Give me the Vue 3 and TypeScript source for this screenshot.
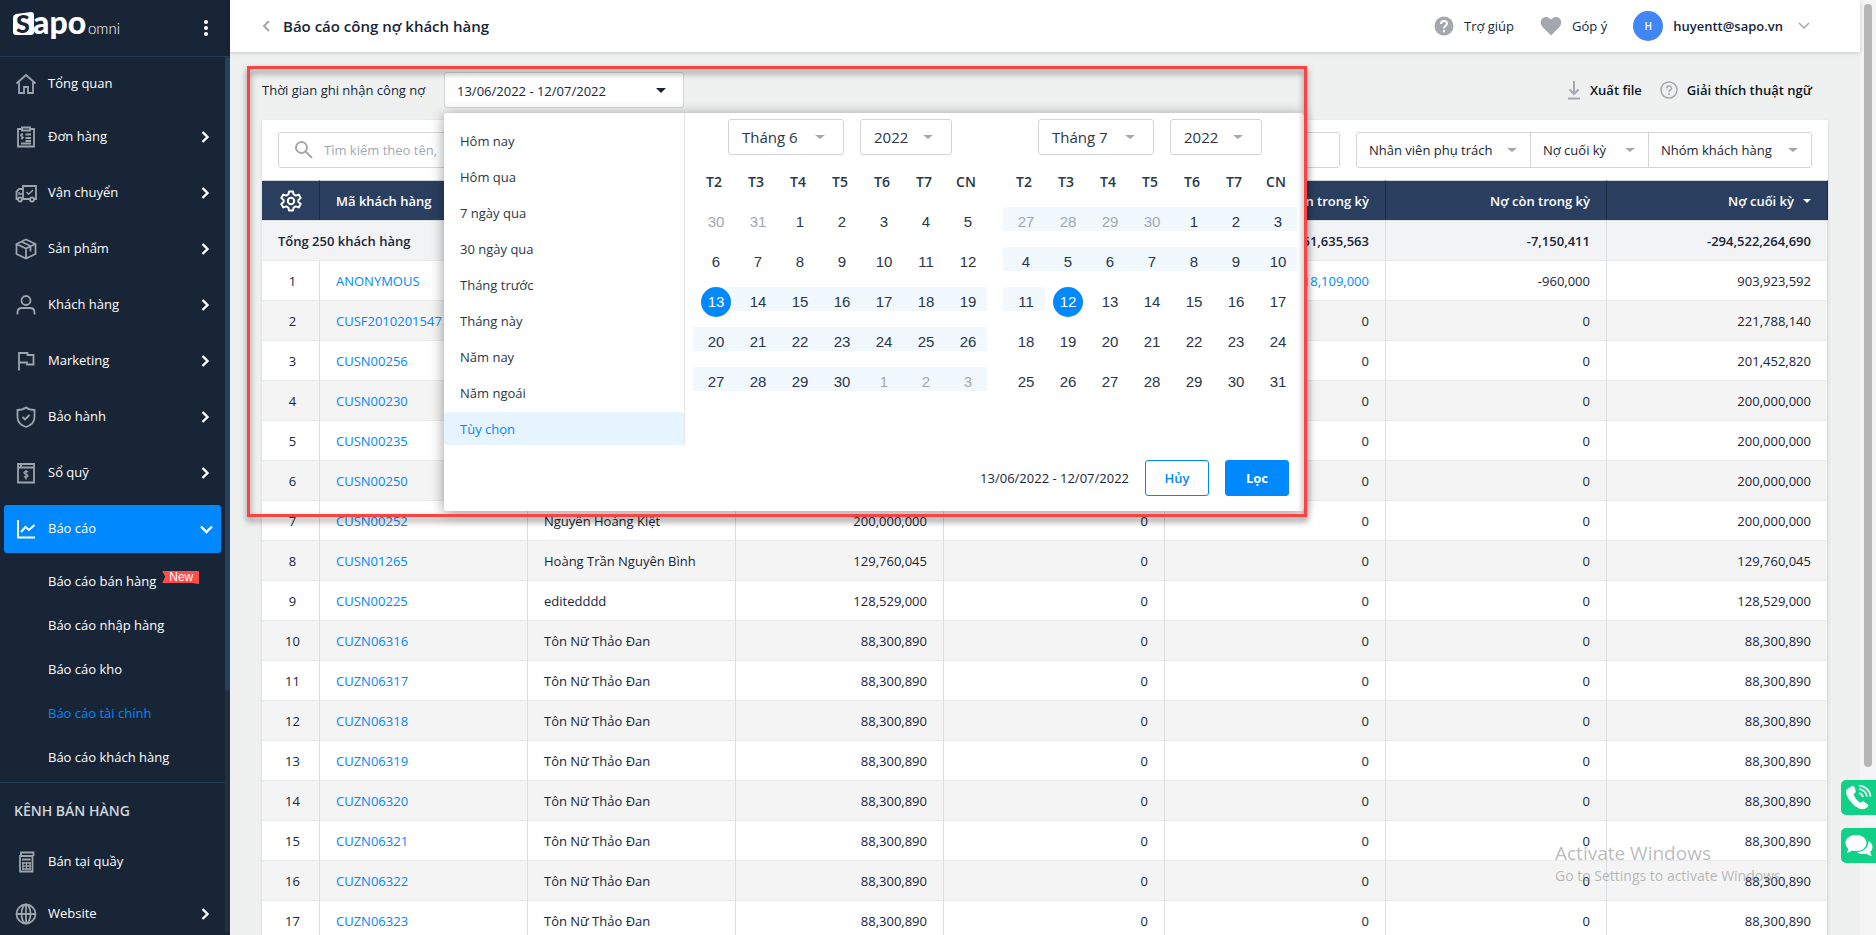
<script setup lang="ts">
import { ref } from 'vue'

interface MenuItem {
  label: string
  icon: string
  arrow: boolean
}

interface Day {
  n: number
  other: boolean
  band: boolean
  picked: boolean
}

interface Row {
  code: string
  name: string
  opening: string
  added: string
  paid: string
  remain: string
  closing: string
  link?: boolean
}

const menu: MenuItem[] = [
  { label: 'Tổng quan', icon: 'home', arrow: false },
  { label: 'Đơn hàng', icon: 'order', arrow: true },
  { label: 'Vận chuyển', icon: 'truck', arrow: true },
  { label: 'Sản phẩm', icon: 'box', arrow: true },
  { label: 'Khách hàng', icon: 'user', arrow: true },
  { label: 'Marketing', icon: 'flag', arrow: true },
  { label: 'Bảo hành', icon: 'shield', arrow: true },
  { label: 'Sổ quỹ', icon: 'cash', arrow: true },
]

const reports = ['Báo cáo bán hàng', 'Báo cáo nhập hàng', 'Báo cáo kho', 'Báo cáo tài chính', 'Báo cáo khách hàng']

const channels: MenuItem[] = [
  { label: 'Bán tại quầy', icon: 'pos', arrow: false },
  { label: 'Website', icon: 'globe', arrow: true },
]

const presets = ['Hôm nay', 'Hôm qua', '7 ngày qua', '30 ngày qua', 'Tháng trước', 'Tháng này', 'Năm nay', 'Năm ngoái', 'Tùy chọn']
const preset = ref('Tùy chọn')
const search = ref('')
const range = '13/06/2022 - 12/07/2022'
const weekdays = ['T2', 'T3', 'T4', 'T5', 'T6', 'T7', 'CN']

const from = Date.UTC(2022, 5, 13)
const to = Date.UTC(2022, 6, 12)
const dayMs = 86400000

function weeks(month: number): Day[][] {
  const first = Date.UTC(2022, month, 1)
  const lead = (new Date(first).getUTCDay() + 6) % 7
  return Array.from({ length: 5 }, (_, w) =>
    Array.from({ length: 7 }, (_, d) => {
      const time = first + (w * 7 + d - lead) * dayMs
      const date = new Date(time)
      const picked = time === from || time === to
      return {
        n: date.getUTCDate(),
        other: date.getUTCMonth() !== month,
        band: time >= from && time < to,
        picked,
      }
    }),
  )
}

const calendars = [
  { month: 'Tháng 6', year: '2022', weeks: weeks(5) },
  { month: 'Tháng 7', year: '2022', weeks: weeks(6) },
]

function row(code: string, name: string, amount: string): Row {
  return { code, name, opening: amount, added: '0', paid: '0', remain: '0', closing: amount }
}

const rows: Row[] = [
  { code: 'ANONYMOUS', name: '', opening: '', added: '', paid: '18,109,000', remain: '-960,000', closing: '903,923,592', link: true },
  row('CUSF2010201547', '', '221,788,140'),
  row('CUSN00256', '', '201,452,820'),
  row('CUSN00230', '', '200,000,000'),
  row('CUSN00235', '', '200,000,000'),
  row('CUSN00250', '', '200,000,000'),
  row('CUSN00252', 'Nguyễn Hoàng Kiệt', '200,000,000'),
  row('CUSN01265', 'Hoàng Trần Nguyên Bình', '129,760,045'),
  row('CUSN00225', 'editedddd', '128,529,000'),
  ...[6, 7, 8, 9].map((n) => row('CUZN0631' + n, 'Tôn Nữ Thảo Đan', '88,300,890')),
  ...[0, 1, 2, 3].map((n) => row('CUZN0632' + n, 'Tôn Nữ Thảo Đan', '88,300,890')),
]

const icons: Record<string, string> = {
  home: '<path d="M1.5 10.5 11 2l9.500 8.500M4 9v11h5v-6h4v6h5V9"/>',
  order: '<path d="M7 3H3v17.500h16V3h-4M7 1.500h8v3H7zM10.500 8.500H16M10.500 12H16M10.500 15H16M6 17.500h10"/><path d="M8 8.500c-2.500-1-3 1.500-1 2s1.500 2.500-1 1.800M7 7v6.500" stroke-width="1.2"/>',
  truck: '<path d="M7 17h8M19 17h2V4H8v12M8 7H4L1.500 9.500V17H3"/><circle cx="5" cy="17.500" r="2"/><circle cx="17" cy="17.500" r="2"/><path d="m11.500 10 2.200 2.200L18 8M4 10v2h4" stroke-width="1.400"/>',
  box: '<path d="M11 1.500 20.500 6v10L11 20.500 1.500 16V6zM1.500 6 11 10.500 20.500 6M11 10.500v10M6.500 3.800 15.500 8v5.500"/>',
  user: '<circle cx="11" cy="6.500" r="4.500"/><path d="M2.500 20.500v-2c0-3 2-4.500 4.500-4.500h8c2.500 0 4.500 1.500 4.500 4.500v2"/>',
  flag: '<path d="M4 20.500V3h8.500v2H18.500v9.500h-6.500v-2H4"/>',
  shield: '<path d="M11 1.500c2.500 2 5 2.500 8.500 2.500v7c0 5-4 8.500-8.500 10-4.500-1.500-8.500-5-8.500-10V4C6 4 8.500 3.500 11 1.500z"/><path d="m7.500 11 2.500 2.500 4.500-4.500"/>',
  cash: '<path d="M3 5.500h16v15H3zM3 5.500V2h16v3.500M6 2v3"/><path d="M13 10c-1-1-4-.8-4 .8 0 2 4 1 4 3 0 1.500-3 1.800-4 .7M11 8v9.500" stroke-width="1.300"/>',
  pos: '<path d="M6 5V1.500h12.500V5M5 5h12.500v15.500H5zM7 8.500h8.500"/><path d="M7 12h9M7 15h9M7 18h9M8 11v8M11.500 11v8M15 11v8" stroke-width="1.300"/>',
  globe: '<circle cx="11" cy="11" r="9.500"/><ellipse cx="11" cy="11" rx="4.500" ry="9.500"/><path d="M11 1.500v19M1.500 11h19"/>',
}
</script>

<template>
  <div class="app">
    <aside class="side">
      <div class="brand">
        <svg class="logo" width="112" height="46" viewBox="0 -8 112 46" role="img" aria-label="Sapo omni">
          <path d="M2 7Q2 4 5 3L20 1Q23 1 23 4V21Q23 24 20 24L5 24Q2 24 2 21z" fill="#fff" />
          <text x="5" y="22" class="logo-s">S</text>
          <text x="22" y="23" class="logo-apo">apo</text>
          <text x="77" y="23" class="logo-omni">omni</text>
        </svg>
        <button class="dots" aria-label="Menu">
          <svg width="6" height="18" viewBox="0 0 6 18" fill="#fff"><circle cx="3" cy="3" r="2" /><circle cx="3" cy="9" r="2" /><circle cx="3" cy="15" r="2" /></svg>
        </button>
      </div>
      <nav class="nav">
        <a v-for="m in menu" :key="m.label" href="#" class="item">
          <svg class="ico" width="22" height="22" viewBox="0 0 22 22" v-html="icons[m.icon]" />
          <span>{{ m.label }}</span>
          <svg v-if="m.arrow" class="chev" width="9" height="12" viewBox="0 0 9 12"><path d="m1.500 1 5 5-5 5" /></svg>
        </a>
        <a href="#" class="item active">
          <svg class="ico" width="22" height="22" viewBox="0 0 22 22"><path d="M3 2v17.500h17" /><path d="m6 14 4.500-5 3.500 3 5.500-5" /></svg>
          <span>Báo cáo</span>
          <svg class="chev down" width="13" height="9" viewBox="0 0 13 9"><path d="m1 1.500 5.500 5.500L12 1.500" /></svg>
        </a>
        <div class="sub">
          <a v-for="(r, i) in reports" :key="r" href="#" :class="{ on: i === 3 }">{{ r }}<span v-if="i === 0" class="new">New</span></a>
        </div>
        <div class="group">
          <h2>KÊNH BÁN HÀNG</h2>
          <a v-for="m in channels" :key="m.label" href="#" class="item">
            <svg class="ico" width="22" height="22" viewBox="0 0 22 22" v-html="icons[m.icon]" />
            <span>{{ m.label }}</span>
            <svg v-if="m.arrow" class="chev" width="9" height="12" viewBox="0 0 9 12"><path d="m1.500 1 5 5-5 5" /></svg>
          </a>
        </div>
        <div class="side-bar"><div class="side-thumb"></div></div>
      </nav>
    </aside>

    <div class="page">
      <header class="top">
        <a href="#" class="back" aria-label="Quay lại"><svg width="8" height="12" viewBox="0 0 8 12"><path d="M7 1 2 6l5 5" fill="none" stroke="#a3a8af" stroke-width="2" /></svg></a>
        <h1>Báo cáo công nợ khách hàng</h1>
        <a href="#" class="tool help">
          <svg width="20" height="20" viewBox="0 0 20 20"><circle cx="10" cy="10" r="9.500" fill="#a3a8af" /><path d="M7 8c0-4 6-4 6-.5 0 2.300-3 2.300-3 5M10 14v2.200" fill="none" stroke="#fff" stroke-width="2" /></svg>
          Trợ giúp
        </a>
        <a href="#" class="tool love">
          <svg width="22" height="20" viewBox="0 0 22 20"><path d="M11 19.500 2.500 11C-3 4 5.500-3 11 3.500 16.500-3 25 4 19.500 11z" fill="#a3a8af" /></svg>
          Góp ý
        </a>
        <button class="account">
          <span class="avatar">H</span>
          huyentt@sapo.vn
          <svg width="12" height="8" viewBox="0 0 12 8"><path d="m1 1 5 5 5-5" fill="none" stroke="#a3a8af" stroke-width="1.500" /></svg>
        </button>
      </header>

      <main class="main">
        <div class="bar">
          <span class="bar-label" id="range-label">Thời gian ghi nhận công nợ</span>
          <div class="picker">
            <button class="range" aria-labelledby="range-label">{{ range }}<svg width="10" height="5" viewBox="0 0 10 5"><path d="M0 0h10L5 5z" fill="#182537" /></svg></button>
            <div class="popup">
              <div class="popup-body">
                <div class="presets">
                  <button v-for="p in presets" :key="p" :class="{ on: p === preset }" @click="preset = p">{{ p }}</button>
                </div>
                <div class="cals">
                  <section v-for="c in calendars" :key="c.month" class="cal">
                    <div class="cal-head">
                      <label class="pick month"><select :aria-label="c.month"><option>{{ c.month }}</option></select></label>
                      <label class="pick"><select :aria-label="'Năm, ' + c.month"><option>{{ c.year }}</option></select></label>
                    </div>
                    <table>
                      <thead><tr><th v-for="w in weekdays" :key="w">{{ w }}</th></tr></thead>
                      <tbody>
                        <tr v-for="(week, i) in c.weeks" :key="i">
                          <td v-for="(d, j) in week" :key="j">
                            <div class="cell" :class="{ band: d.band, start: d.picked }">
                              <button :class="{ other: d.other, picked: d.picked }">{{ d.n }}</button>
                            </div>
                          </td>
                        </tr>
                      </tbody>
                    </table>
                  </section>
                </div>
              </div>
              <div class="popup-foot">
                <span>{{ range }}</span>
                <button class="btn">Hủy</button>
                <button class="btn primary">Lọc</button>
              </div>
            </div>
          </div>
          <a href="#" class="action export">
            <svg width="14" height="20" viewBox="0 0 14 20"><path d="M7 1v13M2.500 9.500 7 14l4.500-4.500M1 18.500h12" fill="none" stroke="#a3a8af" stroke-width="2" /></svg>
            Xuất file
          </a>
          <a href="#" class="action">
            <svg width="18" height="18" viewBox="0 0 18 18" fill="none" stroke="#a3a8af"><circle cx="9" cy="9" r="8" stroke-width="1.500" /><path d="M6.500 7.500c0-3.500 5-3.300 5-.3 0 2-2.500 2-2.500 4M9 12.300v1.700" stroke-width="1.500" /></svg>
            Giải thích thuật ngữ
          </a>
        </div>

        <div class="card">
          <div class="filters">
            <div class="search">
              <svg width="18" height="18" viewBox="0 0 18 18" fill="none" stroke="#a3a8af" stroke-width="2"><circle cx="6.500" cy="6.500" r="5.500" /><path d="m10.500 10.500 6.500 6.500" /></svg>
              <input v-model="search" type="text" aria-label="Tìm kiếm" placeholder="Tìm kiếm theo tên,  mã khách hàng" />
            </div>
            <div class="selects">
              <label class="drop"><select aria-label="Nhân viên phụ trách"><option>Nhân viên phụ trách</option></select></label>
              <label class="drop"><select aria-label="Nợ cuối kỳ"><option>Nợ cuối kỳ</option></select></label>
              <label class="drop"><select aria-label="Nhóm khách hàng"><option>Nhóm khách hàng</option></select></label>
            </div>
          </div>
          <table class="grid">
            <colgroup><col class="c-no" /><col class="c-txt" /><col class="c-txt" /><col class="c-txt" /><col /><col /><col /><col /></colgroup>
            <thead>
              <tr>
                <th class="mid">
                  <button class="gear" aria-label="Cài đặt cột">
                    <svg width="22" height="22" viewBox="0 0 22 22" fill="none" stroke="#fff" stroke-width="2" stroke-linejoin="round"><path d="M9 1.500h4l.6 2.900 2.200 1.200 2.900-1 2 3.400-2.300 2v2l2.300 2-2 3.400-2.900-1-2.200 1.200-.6 2.900H9l-.6-2.900-2.200-1.200-2.900 1-2-3.400 2.300-2v-2l-2.300-2 2-3.400 2.900 1 2.200-1.200z" /><circle cx="11" cy="11" r="3.200" /></svg>
                  </button>
                </th>
                <th class="left">Mã khách hàng</th>
                <th class="left">Tên khách hàng</th>
                <th>Nợ đầu kỳ</th>
                <th>Nợ tăng trong kỳ</th>
                <th>Thanh toán trong kỳ</th>
                <th>Nợ còn trong kỳ</th>
                <th class="sort">Nợ cuối kỳ<svg width="8" height="4" viewBox="0 0 8 4"><path d="M0 0h8L4 4z" fill="#fff" /></svg></th>
              </tr>
            </thead>
            <tbody>
              <tr class="total">
                <td class="left" colspan="2">Tổng 250 khách hàng</td>
                <td></td><td></td><td></td>
                <td>51,635,563</td>
                <td>-7,150,411</td>
                <td>-294,522,264,690</td>
              </tr>
              <tr v-for="(r, i) in rows" :key="r.code">
                <td class="mid">{{ i + 1 }}</td>
                <td class="left"><a href="#">{{ r.code }}</a></td>
                <td class="left">{{ r.name }}</td>
                <td>{{ r.opening }}</td>
                <td>{{ r.added }}</td>
                <td><a v-if="r.link" href="#">{{ r.paid }}</a><template v-else>{{ r.paid }}</template></td>
                <td>{{ r.remain }}</td>
                <td>{{ r.closing }}</td>
              </tr>
            </tbody>
          </table>
        </div>
        <div class="frame"></div>
      </main>
    </div>

    <div class="scroll"><div class="thumb"></div></div>

    <div class="floats">
      <button aria-label="Gọi điện">
        <svg width="27" height="27" viewBox="0 0 27 27"><path d="M3 4.500 7 2c1-.3 2 .2 2.400 1l1.300 4c.2 1-.2 1.700-1 2.200l-1.200 1c1.200 3.500 3.800 6.800 7 8.500l1.500-1c.7-.5 1.500-.5 2.200 0l3.400 2.500c.8.700 1 1.600.4 2.400-3 3.500-7 3.500-11.500.5C6.500 19.500 2 14 1 8.500 .8 7 1.500 5.300 3 4.500z" fill="#fff" /><path d="M14 9c2 .5 3.500 2 4 4M14 5c4 .5 7.500 3.500 8 7.500M14 1.500c6 .5 11 5 11.500 11" fill="none" stroke="#fff" stroke-width="1.700" /></svg>
      </button>
      <button aria-label="Trò chuyện">
        <svg width="28" height="24" viewBox="0 0 28 24" fill="#fff"><path d="M11 1c6 0 10.500 3.500 10.500 8S17 17 11 17c-1.500 0-3-.2-4.300-.6C5.500 17.700 3.500 18.500 1.500 18.500c1.200-1.200 1.800-2.500 1.800-3.800C1.500 13.200.5 11.200.5 9 .5 4.500 5 1 11 1z" /><path d="M23.500 7c2.300 1.200 4 3.300 4 6 0 2-.8 3.500-2.200 4.800 0 1.500.5 2.700 1.700 3.900-2.300.1-4-.7-5.500-2-4 .9-7.500.2-9.500-1.700C19 17.500 24 13 23.500 7z" /></svg>
      </button>
    </div>

    <div class="notice"><p class="big">Activate Windows</p><p>Go to Settings to activate Windows.</p></div>
  </div>
</template>

<style>
html,
body {
  margin: 0;
  background: #eff1f1;
}
</style>

<style scoped>
.app {
  position: relative;
  display: flex;
  height: 100vh;
  overflow: hidden;
  font: 13px/20px "Open Sans", "Noto Sans", sans-serif;
  color: #182537;
}
.app *,
.app *::before,
.app *::after {
  box-sizing: border-box;
}
button,
input,
select {
  margin: 0;
  padding: 0;
  border: 0;
  background: none;
  font: inherit;
  color: inherit;
}
a {
  color: inherit;
  text-decoration: none;
}
svg {
  flex: none;
  display: block;
}

/* sidebar */
.side {
  flex: none;
  width: 230px;
  background: #182537;
  color: #fff;
  overflow: hidden;
}
.brand {
  display: flex;
  align-items: flex-start;
  justify-content: space-between;
  height: 57px;
  padding: 3px 21px 0 11px;
  border-bottom: 1px solid #203d52;
}
.logo-s {
  font: 900 25px Lato, sans-serif;
  fill: #182537;
}
.logo-apo {
  font: 900 32px Lato, sans-serif;
  fill: #fff;
}
.logo-omni {
  font: 300 15px Lato, sans-serif;
  fill: #fff;
}
.dots {
  padding: 16px 0;
}
.nav {
  position: relative;
}
.item {
  display: flex;
  align-items: center;
  height: 48px;
  margin: 8px 9px 8px 4px;
  padding: 0 11px 0 11px;
  border-radius: 3px;
}
.item + .item {
  margin-top: 0;
}
.item:first-child {
  height: 54px;
  margin: 0 9px 2px 4px;
}
.item span {
  flex: 1;
  margin-left: 11px;
  padding-bottom: 2px;
}
.ico {
  fill: none;
  stroke: #9ea4ac;
  stroke-width: 1.8;
}
.chev {
  fill: none;
  stroke: #fff;
  stroke-width: 2.4;
}
.down {
  margin-right: -3px;
}
.active {
  margin-bottom: 7px;
  background: #0088ff;
}
.active .ico {
  stroke: #fff;
  stroke-width: 2;
}
.sub a {
  display: flex;
  height: 44px;
  padding: 11px 0 13px 48px;
}
.sub .on {
  color: #0088ff;
}
.new {
  align-self: flex-start;
  height: 13px;
  margin: 0 0 0 6px;
  padding: 0 6px 0 7px;
  background: #ff4d4d;
  clip-path: polygon(0 0, 100% 0, 100% 100%, 80% 92%, 0 92%, 3px 45%);
  font: 12px/12px "Liberation Sans", sans-serif;
}
.group {
  margin-top: 2px;
  border-top: 1px solid #203d52;
}
.group h2 {
  margin: 18px 0 17px 14px;
  font-size: 14px;
  line-height: 20px;
  font-weight: 600;
  color: #d0d4d9;
}
.group .item {
  margin: 0 9px 4px 4px;
}
.side-bar {
  position: absolute;
  top: 0;
  right: 0;
  width: 5px;
  height: 875px;
  background: #222f40;
}
.side-thumb {
  height: 634px;
  border-radius: 3px;
  background: #2a3f5f;
}

/* top bar */
.page {
  flex: 1;
  min-width: 0;
  background: #eff1f1;
}
.top {
  position: relative;
  display: flex;
  align-items: center;
  height: 52px;
  padding: 0 50px 0 32px;
  background: #fff;
  box-shadow: 0 1px 4px rgba(0, 0, 0, 0.18);
}
.top h1 {
  flex: 1;
  margin: 0 0 0 13px;
  font-size: 15px;
  font-weight: 600;
}
.tool {
  display: flex;
  align-items: center;
  gap: 10px;
  margin-right: 26px;
}
.account {
  display: flex;
  align-items: center;
  gap: 10px;
  font-weight: 600;
}
.account > svg {
  margin-left: 5px;
}
.avatar {
  width: 30px;
  height: 30px;
  border-radius: 50%;
  background: #4285f4;
  color: #fff;
  font: 600 10px/30px "Open Sans", sans-serif;
  text-align: center;
}

/* content */
.main {
  position: relative;
  padding: 20px 32px 0;
}
.bar {
  display: flex;
  align-items: center;
  height: 36px;
  padding-right: 16px;
}
.bar-label {
  width: 182px;
  white-space: nowrap;
}
.picker {
  position: relative;
  margin-right: auto;
}
.range {
  display: flex;
  align-items: center;
  justify-content: space-between;
  width: 240px;
  height: 36px;
  padding: 1px 17px 0 12px;
  border: 1px solid #d3d5d7;
  border-radius: 3px;
  background: #fff;
}
.action {
  display: flex;
  align-items: center;
  gap: 9px;
  font-weight: 600;
  color: #0b1623;
}
.export {
  margin-right: 18px;
}
.card {
  margin-top: 12px;
  background: #fff;
  box-shadow: 0 1px 3px rgba(0, 0, 0, 0.12);
}
.filters {
  display: flex;
  gap: 16px;
  padding: 12px 16px;
}
.search {
  flex: 1;
  display: flex;
  align-items: center;
  gap: 11px;
  height: 36px;
  padding: 0 16px;
  border: 1px solid #d3d5d7;
  border-radius: 3px;
}
.search input {
  flex: 1;
  outline: 0;
}
.search input::placeholder {
  color: #a3a8af;
}
.selects {
  display: grid;
  grid-template-columns: 173px 118px 163px;
  height: 36px;
  border: 1px solid #d3d5d7;
  border-radius: 3px;
}
.drop + .drop {
  border-left: 1px solid #d3d5d7;
}
.drop,
.pick {
  position: relative;
  display: block;
}
.drop select,
.pick select {
  width: 100%;
  height: 100%;
  padding-left: 12px;
  appearance: none;
  outline: 0;
}
.drop::after,
.pick::after {
  content: "";
  position: absolute;
  top: 15px;
  right: 13px;
  border: 5px solid transparent;
  border-top: 4px solid #a3a8af;
  border-bottom: 0;
  pointer-events: none;
}

/* table */
.grid {
  width: 100%;
  table-layout: fixed;
  border-collapse: separate;
  border-spacing: 0;
}
.c-no {
  width: 58px;
}
.c-txt {
  width: 208px;
}
.grid th {
  height: 40px;
  padding: 0 16px;
  border-right: 1px solid #1c2c47;
  border-top: 1px solid #d3d5d7;
  background: #2a3f5f;
  color: #fff;
  font-weight: 600;
  text-align: right;
}
.grid td {
  height: 40px;
  padding: 0 16px;
  border-right: 1px solid #dcdfe2;
  border-bottom: 1px solid #e8eaeb;
  text-align: right;
}
.grid .left {
  text-align: left;
}
.grid .mid {
  padding: 0;
  text-align: center;
}
.grid td.mid {
  padding-left: 4px;
}
.grid tr:nth-child(2n + 3) td {
  background: #f4f4f4;
}
.grid .total td {
  height: 41px;
  background: #f2f3f5;
  border-top: 1px solid #dcdfe2;
  font-weight: 600;
}
.grid a {
  color: #0088ff;
}
.gear {
  display: block;
  margin: 0 auto;
}
.sort svg {
  display: inline-block;
  margin-left: 9px;
  vertical-align: 3px;
}

/* date popup */
.popup {
  position: absolute;
  z-index: 2;
  top: 41px;
  left: 0;
  width: 860px;
  border-radius: 3px;
  background: #fff;
  box-shadow: 0 2px 14px rgba(0, 0, 0, 0.4);
}
.popup-body {
  display: flex;
  color: #2b3646;
}
.presets {
  display: flex;
  flex-direction: column;
  gap: 3px;
  width: 241px;
  padding-top: 11px;
  border-right: 1px solid #e3e5e7;
}
.presets button {
  height: 33px;
  padding-left: 16px;
  border-radius: 3px;
  text-align: left;
}
.presets .on {
  background: #e6f4ff;
  color: #0088ff;
}
.cals {
  display: flex;
  gap: 16px;
  padding: 6px 0 0 8px;
}
.cal {
  width: 294px;
}
.cal-head {
  display: flex;
  justify-content: center;
  gap: 16px;
}
.pick {
  width: 92px;
  height: 36px;
  border: 1px solid #d3d5d7;
  border-radius: 3px;
  font-size: 15px;
}
.month {
  width: 116px;
}
.pick::after {
  right: 18px;
}
.pick select {
  padding-left: 13px;
}
.cal table {
  width: 100%;
  table-layout: fixed;
  border-collapse: collapse;
}
.cal th {
  height: 52px;
  padding: 1px 0 0;
  font-size: 14px;
  font-weight: 600;
}
.cal td {
  height: 40px;
  padding: 0;
  vertical-align: top;
}
.cell {
  height: 24px;
  padding-left: 8px;
}
.band {
  background: #f1f9ff;
}
.band.start {
  background: linear-gradient(90deg, transparent 50%, #f1f9ff 50%);
}
.cell button {
  display: block;
  width: 30px;
  height: 30px;
  border-radius: 50%;
  font: 15px/30px "Liberation Sans", Roboto, sans-serif;
  text-align: center;
}
.cell .other {
  color: #a3a8af;
}
.cell .picked {
  background: #0088ff;
  color: #fff;
}
.popup-foot {
  display: flex;
  align-items: center;
  justify-content: flex-end;
  gap: 16px;
  padding: 15px;
}
.btn {
  width: 64px;
  height: 36px;
  border: 1px solid #0088ff;
  border-radius: 3px;
  background: #fff;
  color: #0088ff;
  font-weight: 600;
}
.primary {
  background: #0088ff;
  color: #fff;
  font-weight: 700;
}

/* highlight frame around the date filter */
.frame {
  position: absolute;
  z-index: 3;
  top: 14px;
  left: 17px;
  width: 1060px;
  height: 451px;
  border: 3px solid #ff4343;
  filter: drop-shadow(0 4px 3px rgba(0, 0, 0, 0.5));
  pointer-events: none;
}

/* window furniture */
.scroll {
  flex: none;
  width: 16px;
  padding: 4px;
  background: #f5f5f5;
}
.thumb {
  height: 763px;
  border-radius: 4px;
  background: #b5b5b5;
}
.floats {
  position: absolute;
  right: 0;
  bottom: 72px;
  display: grid;
  gap: 13px;
}
.floats button {
  display: flex;
  align-items: center;
  justify-content: center;
  width: 35px;
  height: 35px;
  border-radius: 5px 0 0 5px;
  background: #10d186;
}
.notice {
  position: absolute;
  right: 89px;
  bottom: 48px;
  width: 232px;
  color: rgba(120, 120, 120, 0.5);
  font-size: 14px;
  line-height: 22px;
  white-space: nowrap;
  pointer-events: none;
}
.notice p {
  margin: 0;
}
.notice .big {
  font-size: 19px;
  line-height: 24px;
}
</style>
